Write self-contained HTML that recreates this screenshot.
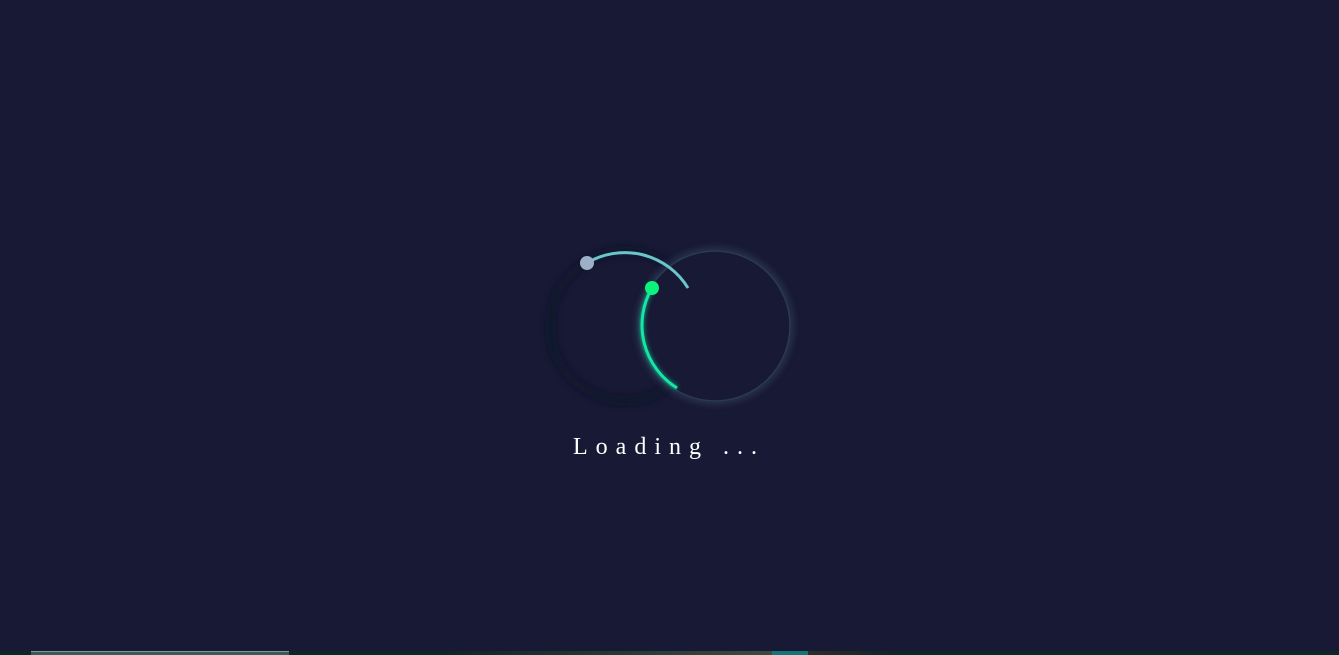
<!DOCTYPE html>
<html><head><style>
html,body{margin:0;padding:0;width:1339px;height:655px;overflow:hidden;background:#181934;}
.t{position:absolute;left:573px;top:434px;font-family:"Liberation Serif","DejaVu Serif",serif;font-size:24px;letter-spacing:8px;color:#fff;white-space:nowrap;}
.bar{position:absolute;left:0;top:651px;width:1339px;height:4px;background:#0f2628;}
</style></head><body>
<svg width="1339" height="655" style="position:absolute;left:0;top:0">
<defs>
<filter id="g" x="-50%" y="-50%" width="200%" height="200%"><feGaussianBlur stdDeviation="4"/></filter>
<filter id="g2" x="-50%" y="-50%" width="200%" height="200%"><feGaussianBlur stdDeviation="2"/></filter>
</defs>
<circle cx="625" cy="326" r="75" fill="none" stroke="#111228" stroke-width="5" filter="url(#g)" opacity="0.8"/>
<circle cx="715" cy="326" r="75" fill="none" stroke="#3d5670" stroke-width="4" filter="url(#g)" opacity="0.8"/>
<circle cx="715" cy="326" r="75" fill="#181934" stroke="#2a3a52" stroke-width="1.5"/>
<path d="M587 263 A74 74 0 0 1 688 288" fill="none" stroke="#6cc4cc" stroke-width="3"/>
<circle cx="587" cy="263" r="7" fill="#9db0c8"/>
<path d="M652 288 A74 74 0 0 0 677 388" fill="none" stroke="#10e0a0" stroke-width="5" filter="url(#g2)" opacity="0.5"/>
<path d="M652 288 A74 74 0 0 0 677 388" fill="none" stroke="#14e6a4" stroke-width="3"/>
<circle cx="652" cy="288" r="7" fill="#0cf27c"/>
</svg>
<div class="t">Loading ...</div>
<div class="bar"></div>
<div style="position:absolute;left:31px;top:651px;width:258px;height:4px;background:#3b5a5a;border-top:1px solid #7a9a9a;box-sizing:border-box"></div>
<div style="position:absolute;left:450px;top:651px;width:322px;height:4px;background:linear-gradient(90deg,#0f2628,#3a4a40)"></div>
<div style="position:absolute;left:772px;top:651px;width:36px;height:4px;background:#127676"></div>
<div style="position:absolute;left:808px;top:651px;width:80px;height:4px;background:linear-gradient(90deg,#2a2e2c,#0f2628)"></div>
</body></html>
